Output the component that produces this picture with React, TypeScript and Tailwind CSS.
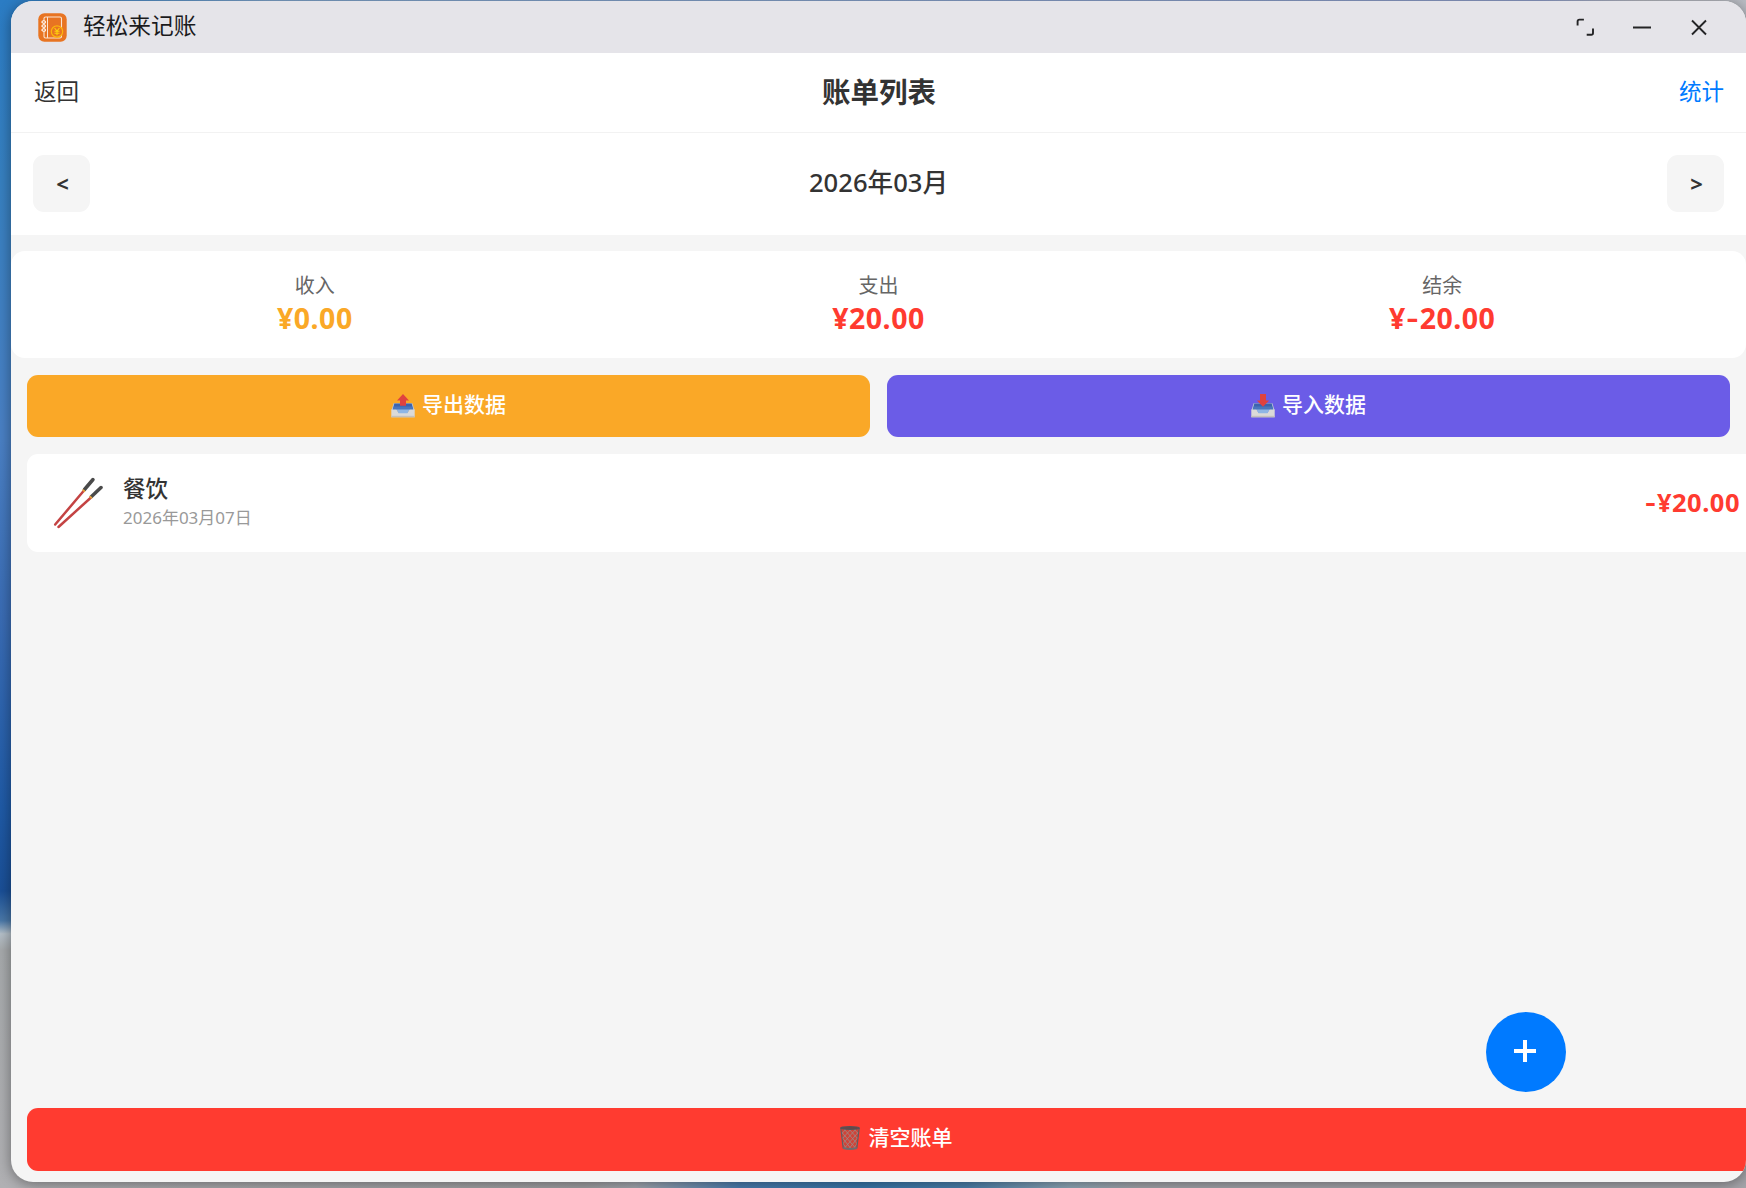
import React from 'react';

interface IconProps {
    className?: string;
}

interface TrayIconProps extends IconProps {
    direction: 'up' | 'down';
}

interface SummaryItem {
    label: string;
    amount: string;
    color: string;
}

interface Bill {
    category: string;
    date: string;
    amount: string;
}

const summary: SummaryItem[] = [
    { label: '收入', amount: '¥0.00', color: 'text-[#faa827]' },
    { label: '支出', amount: '¥20.00', color: 'text-[#ff3b30]' },
    { label: '结余', amount: '¥-20.00', color: 'text-[#ff3b30]' },
];

const bills: Bill[] = [{ category: '餐饮', date: '2026年03月07日', amount: '-¥20.00' }];

const AppLogo: React.FC<IconProps> = ({ className }) => (
    <svg viewBox="0 0 29 29" className={className} fill="none">
        <rect x="0.3" y="0.3" width="28.4" height="28.4" rx="6" fill="#e87422" />
        <rect x="6" y="4" width="17.5" height="21" rx="1.6" stroke="#fbe3d0" strokeWidth="1.1" />
        <path d="M9.5 4v21" stroke="#fbe3d0" strokeWidth="1" />
        <g stroke="#fff" strokeWidth="1.1" fill="#e87422">
            <ellipse cx="5.7" cy="9" rx="1.8" ry="1.3" />
            <ellipse cx="5.7" cy="13" rx="1.8" ry="1.3" />
            <ellipse cx="5.7" cy="17" rx="1.8" ry="1.3" />
        </g>
        <circle cx="19" cy="18.5" r="5.7" fill="#e87422" stroke="#fbb60d" strokeWidth="1.2" />
        <path d="M16.6 15l2.4 3 2.4-3M19 18v4.2M16.5 18.3h5M16.5 20.3h5" stroke="#fdd00c" strokeWidth="1.1" />
    </svg>
);

const TrayIcon: React.FC<TrayIconProps> = ({ direction, className }) => (
    <svg viewBox="0 0 24 24" className={className}>
        <path d="M2.6 9.2h18.8l2.2 7H0.4z" fill="#b7c3d4" />
        <path d="M3.3 9.6h17.4l1.5 6.4H1.8z" fill="#3c63ae" />
        <path d="M2.6 12.5h18.8l0.8 3.5H1.8z" fill="#4a76bd" />
        <path d="M0.3 15.6h5.2l2 3.2h9l2-3.2h5.2v7.6H0.3z" fill="#dbdad8" />
        <path d="M5.5 15.6h13l-2 3.6h-9z" fill="#8fb6e4" />
        <path d="M0.3 21.8h23.4v1.5H0.3z" fill="#c4c1bd" />
        {direction === 'up' ? (
            <path d="M12 0l6 6.5h-3v5.3H9V6.5H6z" fill="#e0423f" />
        ) : (
            <path d="M9 0h6v6.5h3.2L12 12.8 5.8 6.5H9z" fill="#e0423f" />
        )}
    </svg>
);

const ChopsticksIcon: React.FC<IconProps> = ({ className }) => (
    <svg viewBox="0 0 50 52" className={className} strokeLinecap="round">
        <path d="M2.2 47.5L31 13.5" stroke="#c44343" strokeWidth="2.5" />
        <path d="M5.5 50L38 20.5" stroke="#c44343" strokeWidth="2.5" />
        <path d="M31.5 12.500L40 2.500" stroke="#4a4a4a" strokeWidth="3.5" />
        <path d="M38.5 19.500L48 10.500" stroke="#4a4a4a" strokeWidth="3.5" />
        <path d="M30.2 13.1l1.200 1.100M37.200 19.700l1.200 1.200" stroke="#e5a13a" strokeWidth="1.8" />
    </svg>
);

const TrashIcon: React.FC<IconProps> = ({ className }) => (
    <svg viewBox="0 0 20 24" className={className} fill="none">
        <path d="M0.8 2l2.4 20.5q6.8 1.6 13.6 0L19.2 2z" fill="#d04338" />
        <path
            d="M1.5 6l14 16M4 3l13.4 15M9 3l9 10M14 3l4.5 5M1.8 11l9 11.5M2.5 17l4 5.5M18.5 6l-14 16M16 3L2.6 18M11 3L2 13M6 3L1.5 8M18.2 11l-9 11.5M17.5 17l-4 5.5"
            stroke="#9a8c89"
            strokeWidth="0.8"
        />
        <path d="M0.8 2l2.4 20.5M19.2 2l-2.4 20.5" stroke="#625c5e" strokeWidth="1.2" />
        <ellipse cx="10" cy="2" rx="9.3" ry="1.3" fill="#6d4445" stroke="#565357" strokeWidth="1.2" />
        <path d="M3.2 22q6.8 1.8 13.6 0" stroke="#6f6b6e" strokeWidth="2" />
    </svg>
);

// The minus sign is set in Inter, whose hyphen is wide enough to read next to bold digits.
const Amount: React.FC<{ value: string }> = ({ value }) => (
    <>
        {value.split(/(-)/).map((part, i) =>
            part === '-' ? (
                <span key={i} className="font-['Inter']">
                    -
                </span>
            ) : (
                part
            )
        )}
    </>
);

const TitleBar: React.FC = () => (
    <div className="flex h-[52px] shrink-0 items-center justify-between bg-[#e5e4e9] pl-[27px] pr-[38px]">
        <div className="flex items-center gap-4">
            <AppLogo className="h-[29px] w-[29px]" />
            <span className="pb-0.5 text-[22.7px] leading-none text-[#1b1b1d]">轻松来记账</span>
        </div>
        <div className="flex items-center gap-[39px] text-[#242426]">
            <svg viewBox="0 0 18 18" className="h-[18px] w-[18px]" fill="none" stroke="currentColor" strokeWidth="1.9">
                <path d="M1.6 7.5V3.4q0-1.8 1.8-1.8h4.5M17 10.5V15q0 1.8-1.8 1.8h-4.5" />
            </svg>
            <svg viewBox="0 0 18 18" className="h-[18px] w-[18px]" fill="none" stroke="currentColor" strokeWidth="1.9">
                <path d="M0 9.5h18" />
            </svg>
            <svg viewBox="0 0 18 18" className="h-[18px] w-[18px]" fill="none" stroke="currentColor" strokeWidth="1.9">
                <path d="M2 2.5l14 14M16 2.5l-14 14" />
            </svg>
        </div>
    </div>
);

const App: React.FC = () => {
    return (
        <div className="relative h-[1188px] w-[1746px] overflow-hidden bg-[linear-gradient(#2b7cc4_0%,#3780c0_15%,#4a80c4_37%,#3a6cb4_52%,#1f5aa6_68%,#1a4f96_75%,#4a78a8_77.5%,#b4bfc8_78.6%,#a6a9ab_80%,#b0b0b3_100%)] pl-[11px] pt-px font-['Noto_Sans','Noto_Sans_CJK_SC',sans-serif] text-[#333]">
            {/* wallpaper showing along the top and bottom window edges */}
            <div className="absolute left-[11px] right-0 top-0 h-10 bg-[linear-gradient(90deg,#2b7cc4_0%,#7ea3cb_15%,#8d9cc8_88%,#b3b5bd_94%,#b9bcc3_100%)]" />
            <div className="absolute bottom-0 left-[11px] right-0 h-10 bg-[linear-gradient(90deg,#b0b0b3_0%,#a0a0a3_33%,#a3a8b0_36%,#4a7eb0_42%,#3878ac_49%,#4a80ac_55%,#8fa8b8_61%,#a3a5ab_65%,#a5a5aa_100%)]" />

            <div className="relative flex h-[1181px] flex-col overflow-hidden rounded-[22px] bg-[#f5f5f5] shadow-[0_2px_14px_rgba(0,0,0,0.4)]">
                <TitleBar />

                <div className="grid h-20 shrink-0 grid-cols-3 items-center border-b border-[#f2f2f2] bg-white pb-0.5 pl-[23px] pr-[22px]">
                    <span className="text-[22.5px]">返回</span>
                    <h1 className="pt-0.5 text-center text-[28.5px] font-bold">账单列表</h1>
                    <span className="text-right text-[22.5px] text-[#007aff]">统计</span>
                </div>

                <div className="flex h-[102px] shrink-0 items-center justify-between bg-white px-[22px] pb-px">
                    <button className="h-[57px] w-[57px] rounded-[11px] bg-[#f5f5f5] pb-px pl-0.5 text-[22px] font-bold">&lt;</button>
                    <span className="text-[25.6px] font-medium">2026年03月</span>
                    <button className="h-[57px] w-[57px] rounded-[11px] bg-[#f5f5f5] pb-px pl-0.5 text-[22px] font-bold">&gt;</button>
                </div>

                <div className="mt-4 grid h-[107px] shrink-0 grid-cols-3 rounded-[14px] bg-white px-[22px] pt-[19px] text-center">
                    {summary.map((item) => (
                        <div key={item.label}>
                            <div className="text-[20px] leading-[31px] text-[#666]">{item.label}</div>
                            <div className={`text-[28.5px] font-bold leading-[34px] tracking-[0.5px] ${item.color}`}>
                                <Amount value={item.amount} />
                            </div>
                        </div>
                    ))}
                </div>

                <div className="mt-[17px] flex h-[62px] shrink-0 gap-[17px] px-4 text-[21px] font-medium text-white">
                    <button className="flex flex-1 items-center justify-center gap-[7px] rounded-[11px] bg-[#faa827]">
                        <TrayIcon direction="up" className="h-6 w-6" />
                        <span className="pb-0.5">导出数据</span>
                    </button>
                    <button className="flex flex-1 items-center justify-center gap-[7px] rounded-[11px] bg-[#6b5ce7]">
                        <TrayIcon direction="down" className="h-6 w-6" />
                        <span className="pb-0.5">导入数据</span>
                    </button>
                </div>

                <div className="mt-[17px] flex-1 pl-4">
                    {bills.map((bill) => (
                        <div key={bill.date} className="flex h-[98px] items-center rounded-l-[11px] bg-white pb-px pl-[26px] pr-[6px]">
                            <ChopsticksIcon className="h-[52px] w-[50px]" />
                            <div className="ml-5 flex-1">
                                <div className="text-[22.5px] font-medium leading-[30px]">{bill.category}</div>
                                <div className="pt-px text-[17px] leading-[26px] text-[#999]">{bill.date}</div>
                            </div>
                            <div className="text-[25.5px] font-bold tracking-[0.5px] text-[#ff3b30]">
                                <Amount value={bill.amount} />
                            </div>
                        </div>
                    ))}
                </div>

                {/* runs past the right edge of the window and is clipped there */}
                <button className="-mr-4 mb-[11px] ml-4 flex h-[63px] shrink-0 items-center justify-center gap-[9px] rounded-[11px] bg-[#ff3b30] pb-[3px] pl-[3px] text-[21px] font-medium text-white">
                    <TrashIcon className="h-6 w-5" />
                    清空账单
                </button>

                <button className="absolute bottom-[90px] right-[180px] flex h-20 w-20 items-center justify-center rounded-full bg-[#007aff] pb-0.5 pr-0.5 text-white">
                    <svg viewBox="0 0 22 22" className="h-[22px] w-[22px]" fill="none" stroke="currentColor" strokeWidth="4">
                        <path d="M11 0v22M0 11h22" />
                    </svg>
                </button>
            </div>
        </div>
    );
};

export default App;
